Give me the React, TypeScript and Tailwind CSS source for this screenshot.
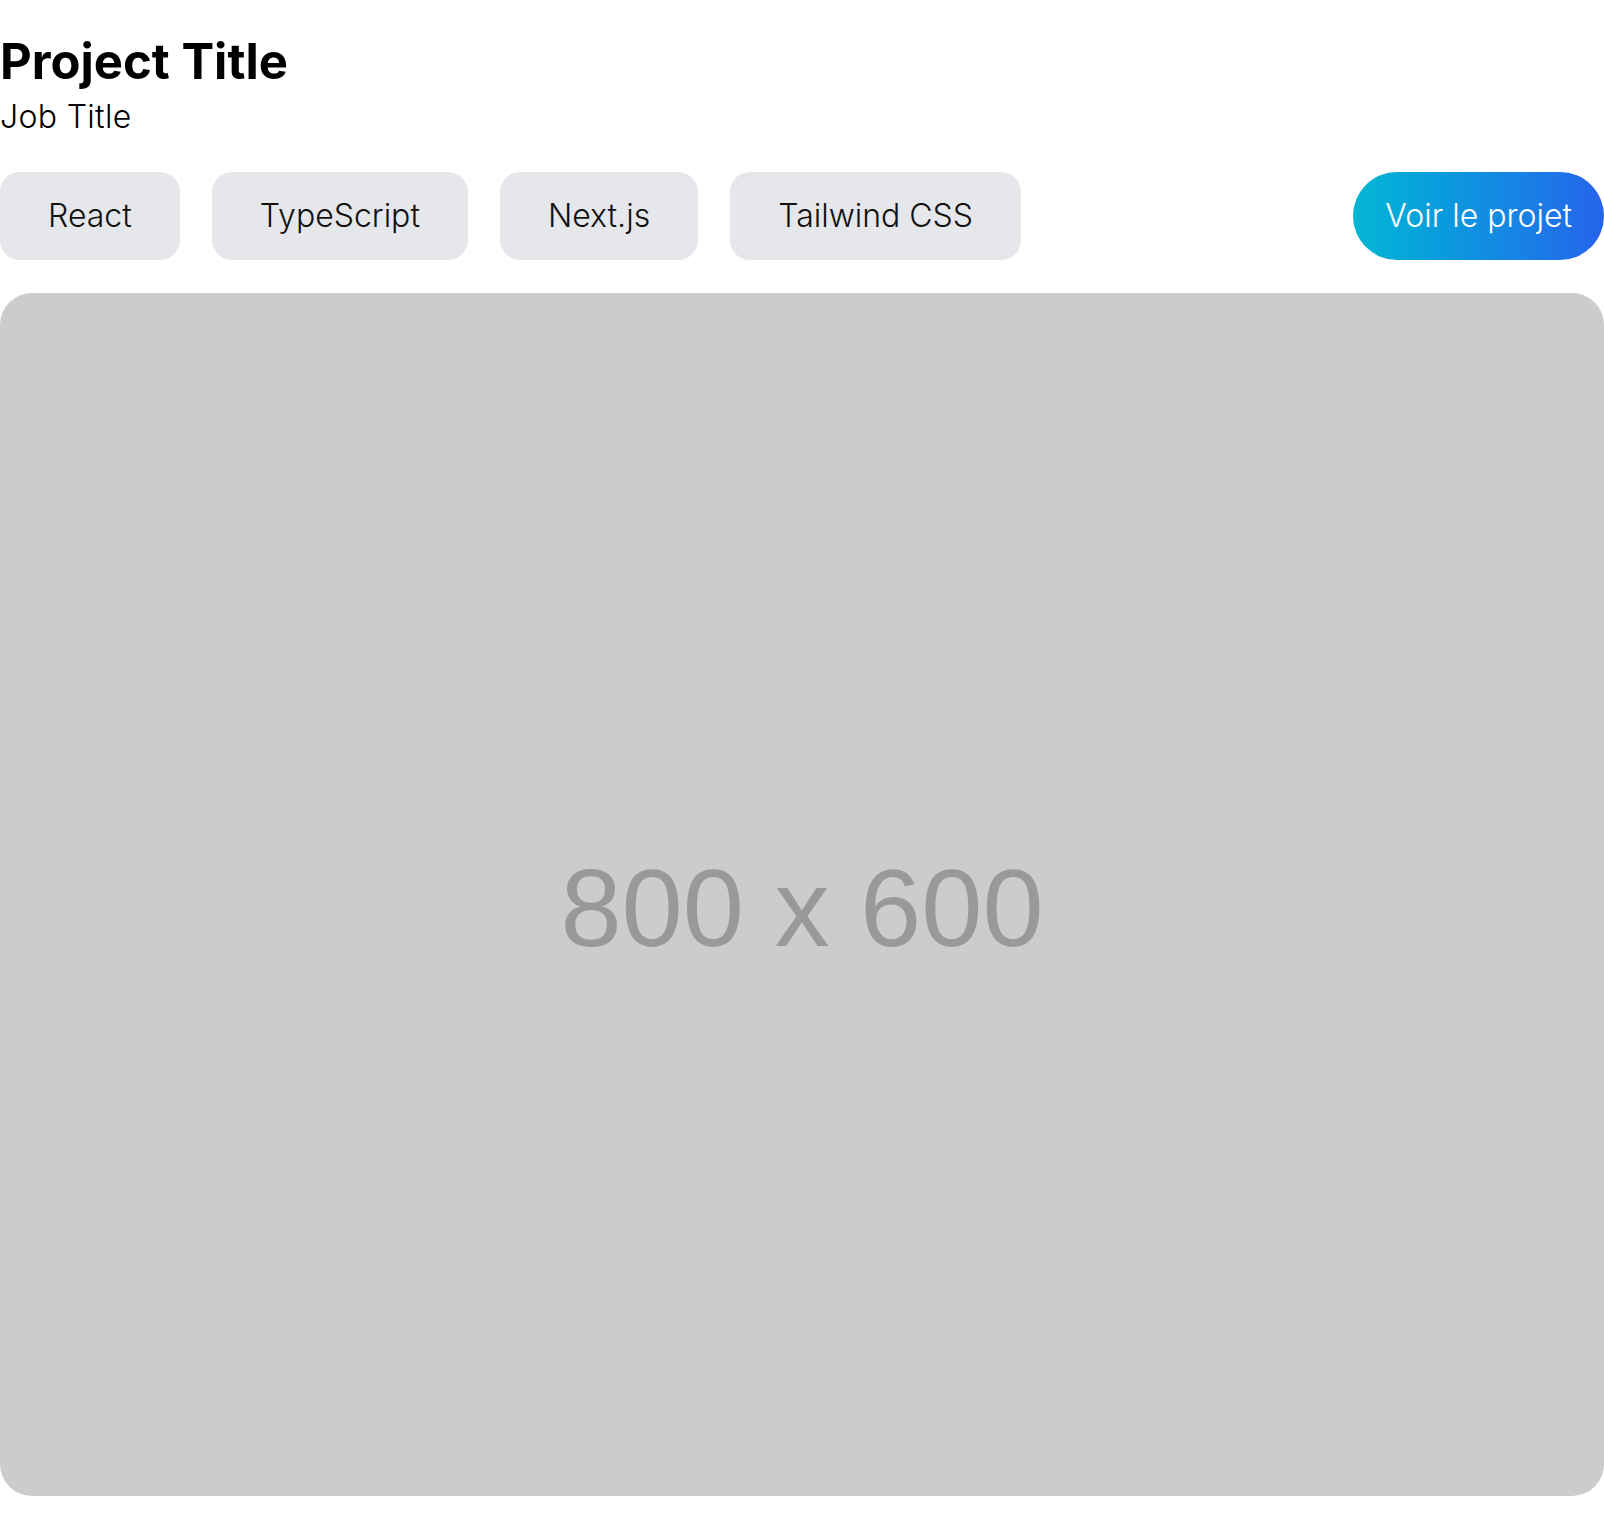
export default function App() {
  const stack = ["React", "TypeScript", "Next.js", "Tailwind CSS"];

  return (
    <div className="min-h-screen bg-white text-black font-['Inter',sans-serif]">
      {/* Header */}
      <div className="pt-[37px]">
        <h1 className="text-[49px] leading-none font-bold">Project Title</h1>
        <p className="text-[32px] leading-10 font-light tracking-[0.01em] mt-[11px]">Job Title</p>
      </div>

      {/* Stack + link */}
      <div className="flex items-center justify-between mt-[35px]">
        <div className="flex gap-8">
          {stack.map((tech) => (
            <span
              key={tech}
              className="bg-[#e5e7eb] rounded-[20px] px-12 h-[88px] flex items-center text-[32px] font-light text-[#111111]"
            >
              {tech}
            </span>
          ))}
        </div>
        <a
          href="#"
          className="h-[88px] px-8 flex items-center rounded-full bg-gradient-to-r from-[#06b6d4] to-[#2563eb] text-white text-[32px] font-light"
        >
          Voir le projet
        </a>
      </div>

      {/* Preview */}
      <div className="mt-[33px] w-full aspect-[4/3] rounded-[32px] bg-[#cccccc] flex items-center justify-center overflow-hidden">
        <span className="font-['Liberation_Sans',Arial,sans-serif] text-[110px] text-[#999999] pt-[26px]">
          800 x 600
        </span>
      </div>
    </div>
  );
}
